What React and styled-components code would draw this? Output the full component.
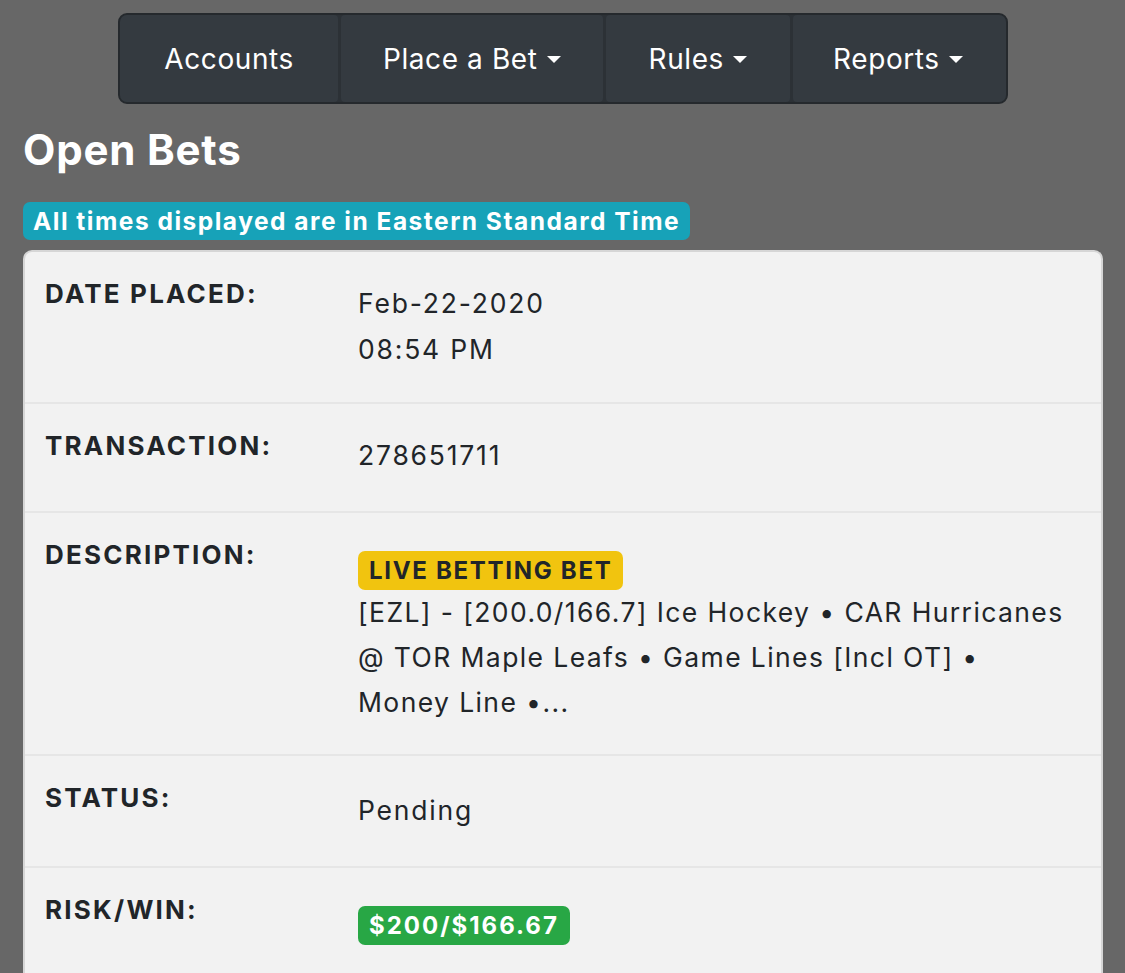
import React from "react";
import styled, { createGlobalStyle } from "styled-components";

const Global = createGlobalStyle`
  html, body { margin: 0; padding: 0; background: #676767; }
  body { font-family: Inter, "Noto Sans", "DejaVu Sans", sans-serif; color: #212529; }
  * { box-sizing: border-box; }
`;

const Page = styled.div`
  padding: 13px 22px 0 23px;
  display: flex;
  flex-direction: column;
  align-items: stretch;
`;

const NavWrap = styled.div`
  display: flex;
  justify-content: center;
`;

const Nav = styled.nav`
  display: flex;
  height: 91px;
  background: #2c3136;
  border: 2px solid #25292d;
  border-radius: 9px;
  overflow: hidden;
`;

const NavItem = styled.div`
  display: flex;
  align-items: center;
  gap: 9px;
  padding: 0 ${(p) => p.$pr}px 0 ${(p) => p.$pl}px;
  background: #343a40;
  color: #fff;
  font-size: 28px;
  font-weight: 400;
  letter-spacing: 0.6px;
  border-radius: 4px;
  & + & { margin-left: 3px; }
`;

const Caret = styled.span`
  display: inline-block;
  width: 0;
  height: 0;
  border-left: 7px solid transparent;
  border-right: 7px solid transparent;
  border-top: 7px solid #fff;
  margin-top: 1px;
`;

const Title = styled.h1`
  margin: 22px 0 0 0;
  font-size: 42px;
  font-weight: 700;
  color: #fff;
  line-height: 48px;
  letter-spacing: 0.8px;
`;

const InfoRow = styled.div`
  display: flex;
  margin-top: 28px;
`;

const Pill = styled.span`
  display: inline-flex;
  align-items: center;
  height: ${(p) => p.$h || 38}px;
  padding: 0 ${(p) => p.$px || 10}px;
  border-radius: 7px;
  background: ${(p) => p.$bg};
  color: ${(p) => p.$fg};
  font-size: ${(p) => p.$fs || 24.5}px;
  font-weight: 700;
  letter-spacing: ${(p) => p.$ls ?? 1.5}px;
  white-space: nowrap;
`;

const Card = styled.div`
  margin-top: 10px;
  background: #f2f2f2;
  border: 2px solid #d6d6d6;
  border-radius: 9px;
  border-bottom: none;
  border-bottom-left-radius: 0;
  border-bottom-right-radius: 0;
`;

const Row = styled.div`
  display: grid;
  grid-template-columns: 313px 1fr;
  padding: 23px 20px ${(p) => p.$pb || 32}px 20px;
  & + & { border-top: 2px solid #e6e6e6; }
`;

const Label = styled.div`
  font-size: 26px;
  font-weight: 700;
  line-height: 37px;
  letter-spacing: 2.2px;
  color: #212529;
`;

const Value = styled.div`
  margin-top: ${(p) => p.$mt ?? 6}px;
  font-size: 26.5px;
  line-height: 45.5px;
  letter-spacing: 1.8px;
  color: #212529;
  padding-right: 10px;
`;

const Desc = styled.div`
  margin-top: -2px;
  max-width: 710px;
  line-height: 45px;
  letter-spacing: 1.4px;
`;

export default function App() {
  return (
    <>
      <Global />
      <Page>
        <NavWrap>
          <Nav>
            <NavItem $pl={44} $pr={44}>Accounts</NavItem>
            <NavItem $pl={42} $pr={42}>Place a Bet <Caret /></NavItem>
            <NavItem $pl={43} $pr={43}>Rules <Caret /></NavItem>
            <NavItem $pl={40} $pr={43}>Reports <Caret /></NavItem>
          </Nav>
        </NavWrap>
        <Title>Open Bets</Title>
        <InfoRow>
          <Pill $bg="#17a2b8" $fg="#fff">All times displayed are in Eastern Standard Time</Pill>
        </InfoRow>
        <Card>
          <Row $pb={30}>
            <Label>DATE PLACED:</Label>
            <Value>Feb-22-2020<br />08:54 PM</Value>
          </Row>
          <Row>
            <Label>TRANSACTION:</Label>
            <Value>278651711</Value>
          </Row>
          <Row $pb={29}>
            <Label>DESCRIPTION:</Label>
            <Value $mt={11}>
              <Pill $bg="#f1c40f" $fg="#212529" $h={39} $px={11} $fs={24} $ls={1.7}>LIVE BETTING BET</Pill>
              <Desc>
                [EZL] - [200.0/166.7] Ice Hockey • CAR Hurricanes @ TOR Maple Leafs • Game Lines [Incl OT] • Money Line •...
              </Desc>
            </Value>
          </Row>
          <Row>
            <Label>STATUS:</Label>
            <Value $mt={9}>Pending</Value>
          </Row>
          <Row>
            <Label>RISK/WIN:</Label>
            <Value $mt={11}>
              <Pill $bg="#28a745" $fg="#fff" $h={39} $px={11} $fs={24} $ls={2}>$200/$166.67</Pill>
            </Value>
          </Row>
        </Card>
      </Page>
    </>
  );
}
